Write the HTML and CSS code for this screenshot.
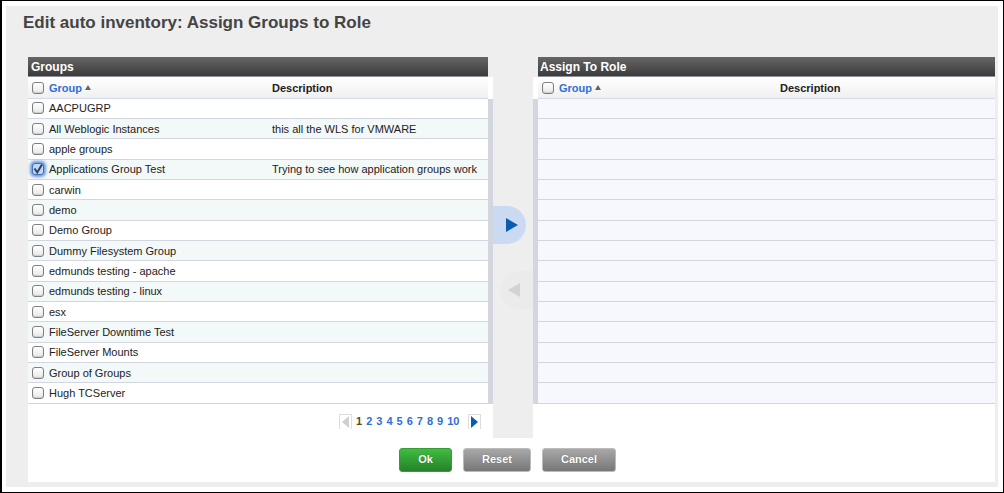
FILE: index.html
```html
<!DOCTYPE html>
<html lang="en">
<head>
    <meta charset="UTF-8">
    <title>Edit auto inventory: Assign Groups to Role</title>
    <link rel="stylesheet" href="styles.css">
</head>
<body>
<div class="frame">
    <div class="panel">
        <h1>Edit auto inventory: Assign Groups to Role</h1>
        <div class="lists">
            <div class="col col-left">
                <div class="bar">Groups</div>
                <div class="body">
                    <div class="row head">
                        <span class="check"></span>
                        <span class="name"><a class="sort">Group</a><i class="asc"></i></span>
                        <span class="desc">Description</span>
                    </div>
                    <div class="rows">
                        <div class="row"><span class="check"></span><span class="name">AACPUGRP</span><span class="desc"></span></div>
                        <div class="row"><span class="check"></span><span class="name">All Weblogic Instances</span><span class="desc">this all the WLS for VMWARE</span></div>
                        <div class="row"><span class="check"></span><span class="name">apple groups</span><span class="desc"></span></div>
                        <div class="row"><span class="check checked"><svg width="12" height="12" viewBox="0 0 12 12"><path d="M2.5 5.5 5.2 9.5 10 1.5" fill="none" stroke="#27406f" stroke-width="2"/></svg></span><span class="name">Applications Group Test</span><span class="desc">Trying to see how application groups work</span></div>
                        <div class="row"><span class="check"></span><span class="name">carwin</span><span class="desc"></span></div>
                        <div class="row"><span class="check"></span><span class="name">demo</span><span class="desc"></span></div>
                        <div class="row"><span class="check"></span><span class="name">Demo Group</span><span class="desc"></span></div>
                        <div class="row"><span class="check"></span><span class="name">Dummy Filesystem Group</span><span class="desc"></span></div>
                        <div class="row"><span class="check"></span><span class="name">edmunds testing - apache</span><span class="desc"></span></div>
                        <div class="row"><span class="check"></span><span class="name">edmunds testing - linux</span><span class="desc"></span></div>
                        <div class="row"><span class="check"></span><span class="name">esx</span><span class="desc"></span></div>
                        <div class="row"><span class="check"></span><span class="name">FileServer Downtime Test</span><span class="desc"></span></div>
                        <div class="row"><span class="check"></span><span class="name">FileServer Mounts</span><span class="desc"></span></div>
                        <div class="row"><span class="check"></span><span class="name">Group of Groups</span><span class="desc"></span></div>
                        <div class="row"><span class="check"></span><span class="name">Hugh TCServer</span><span class="desc"></span></div>
                    </div>
                    <div class="pager">
                        <span class="page-btn"><i class="tri-left"></i></span>
                        <span class="pages"><b class="current">1</b><a>2</a><a>3</a><a>4</a><a>5</a><a>6</a><a>7</a><a>8</a><a>9</a><a>10</a></span>
                        <span class="page-btn"><i class="tri-right"></i></span>
                    </div>
                </div>
            </div>
            <div class="mover">
                <div class="move move-add"><i></i></div>
                <div class="move move-remove"><i></i></div>
            </div>
            <div class="col col-right">
                <div class="bar">Assign To Role</div>
                <div class="body">
                    <div class="row head">
                        <span class="check"></span>
                        <span class="name"><a class="sort">Group</a><i class="asc"></i></span>
                        <span class="desc">Description</span>
                    </div>
                    <div class="rows">
                        <div class="row"></div><div class="row"></div><div class="row"></div>
                        <div class="row"></div><div class="row"></div><div class="row"></div>
                        <div class="row"></div><div class="row"></div><div class="row"></div>
                        <div class="row"></div><div class="row"></div><div class="row"></div>
                        <div class="row"></div><div class="row"></div><div class="row"></div>
                    </div>
                </div>
            </div>
        </div>
        <div class="actions">
            <button class="btn btn-ok">Ok</button>
            <button class="btn btn-reset">Reset</button>
            <button class="btn btn-cancel">Cancel</button>
        </div>
    </div>
</div>
</body>
</html>
```
FILE: styles.css
```css
* {
    box-sizing: border-box;
}
html, body {
    margin: 0;
    height: 100%;
}
body {
    font-family: "Liberation Sans", Arial, sans-serif;
    font-size: 11px;
    color: #222;
    background-color: #fff;
    overflow: hidden;
}
.frame {
    width: 1004px;
    height: 493px;
    border-style: solid;
    border-color: #000;
    border-width: 1px 1px 1px 2px;
    padding: 5px 5px 5px 4px;
}
.panel {
    height: 100%;
    background-color: #eee;
    padding: 0 3px 5px 22px;
    display: flex;
    flex-direction: column;
}
h1 {
    margin: 0 0 0 -5px;
    height: 51px;
    padding-top: 7px;
    font-size: 17px;
    line-height: 20px;
    font-weight: bold;
    color: #444;
}
.lists {
    display: flex;
    height: 381px;
}
.col {
    display: flex;
    flex-direction: column;
}
.col-left {
    width: 465px;
}
.col-right {
    width: 462px;
}
.bar {
    height: 20px;
    line-height: 21px;
    font-size: 12px;
    font-weight: bold;
    color: #fff;
    padding-left: 3px;
    background: linear-gradient(#666, #3b3b3b);
    border-bottom: 1px solid #8f929c;
}
.col-left .bar {
    margin-right: 5px;
}
.col-right .bar {
    margin-left: 5px;
    padding-left: 2px;
}
.body {
    flex: 1;
    background-color: #fff;
}
.row {
    display: flex;
    align-items: center;
    height: 20.33px;
    padding-left: 4px;
    border-bottom: 1px solid #d3d6de;
}
.head {
    height: 21.7px;
    padding-top: 2px;
    background: linear-gradient(#fff, #f0f0f0);
    border-bottom-color: #d5d9ee;
    font-weight: bold;
}
.col-left .head {
    margin-right: 5px;
}
.col-right .head {
    margin-left: 5px;
}
.rows {
    height: 305.3px;
}
.col-left .rows {
    border-right: 5px solid #d3d6df;
}
.col-right .rows {
    border-left: 5px solid #d3d6df;
    background-color: #f7f8fe;
}
.col-left .row:nth-child(even) {
    background-color: #f3f8f8;
}
.name {
    width: 223px;
    margin-left: 5px;
    white-space: nowrap;
}
.col-right .name {
    width: 221px;
}
.desc {
    white-space: nowrap;
}
.sort {
    color: #2f6fd6;
}
.asc {
    display: inline-block;
    margin-left: 3px;
    vertical-align: 2px;
    border-left: 3px solid transparent;
    border-right: 3px solid transparent;
    border-bottom: 5px solid #666;
}
.check {
    flex: none;
    width: 12px;
    height: 12px;
    border: 1px solid #808080;
    border-radius: 3px;
    background: linear-gradient(#fff, #e8e8e8);
    box-shadow: inset 0 -1px 1px #ccc;
    display: flex;
}
.check svg {
    margin: -1px;
}
.checked {
    border-color: #4a6ea8;
    background: #c3d6f3;
    box-shadow: 0 0 3px 2px #6e9ae0;
}
.pager {
    display: flex;
    align-items: center;
    height: 35px;
    padding-left: 311px;
    margin-right: 5px;
}
.page-btn {
    width: 13px;
    height: 15px;
    border: 1px solid #ddd;
    border-bottom: 0;
    display: flex;
    align-items: center;
    justify-content: center;
}
.pages {
    display: flex;
    gap: 4px;
    width: 116px;
    padding-left: 4px;
    font-weight: bold;
    color: #2f6fd6;
}
.current {
    color: #5a4a20;
}
.tri-left {
    border-top: 6px solid transparent;
    border-bottom: 6px solid transparent;
    border-right: 7px solid #d0d0d0;
}
.tri-right {
    border-top: 6px solid transparent;
    border-bottom: 6px solid transparent;
    border-left: 7px solid #0a5cb0;
}
.mover {
    width: 40px;
    background-color: #eee;
    padding-top: 149px;
}
.move {
    width: 33px;
    height: 38px;
    display: flex;
    align-items: center;
    justify-content: center;
}
.move i {
    display: block;
    border-top: 7px solid transparent;
    border-bottom: 7px solid transparent;
}
.move-add {
    background-color: #cbdaf3;
    border-radius: 0 19px 19px 0;
    padding-left: 5px;
}
.move-add i {
    border-left: 12px solid #0a5cb0;
}
.move-remove {
    margin: 27px 0 0 7px;
    background-color: #ebebeb;
    border-radius: 19px 0 0 19px;
    padding-right: 6px;
}
.move-remove i {
    border-right: 12px solid #d2d2d2;
}
.actions {
    flex: 1;
    display: flex;
    gap: 11px;
    background-color: #fff;
    padding: 10px 0 0 371px;
}
.btn {
    height: 24px;
    padding: 0 0 2px;
    font-family: inherit;
    font-size: 11px;
    font-weight: bold;
    color: #fff;
    border-radius: 3px;
    text-shadow: 0 0 1px rgba(0, 0, 0, 0.4);
    cursor: pointer;
}
.btn-ok {
    width: 53px;
    border: 1px solid #3a9a3a;
    background: linear-gradient(#40bd40, #25812a);
}
.btn-reset {
    width: 68px;
    border: 1px solid #bbb;
    background: linear-gradient(#a8a8a8, #777);
}
.btn-cancel {
    width: 74px;
    border: 1px solid #bbb;
    background: linear-gradient(#a8a8a8, #777);
}
```
